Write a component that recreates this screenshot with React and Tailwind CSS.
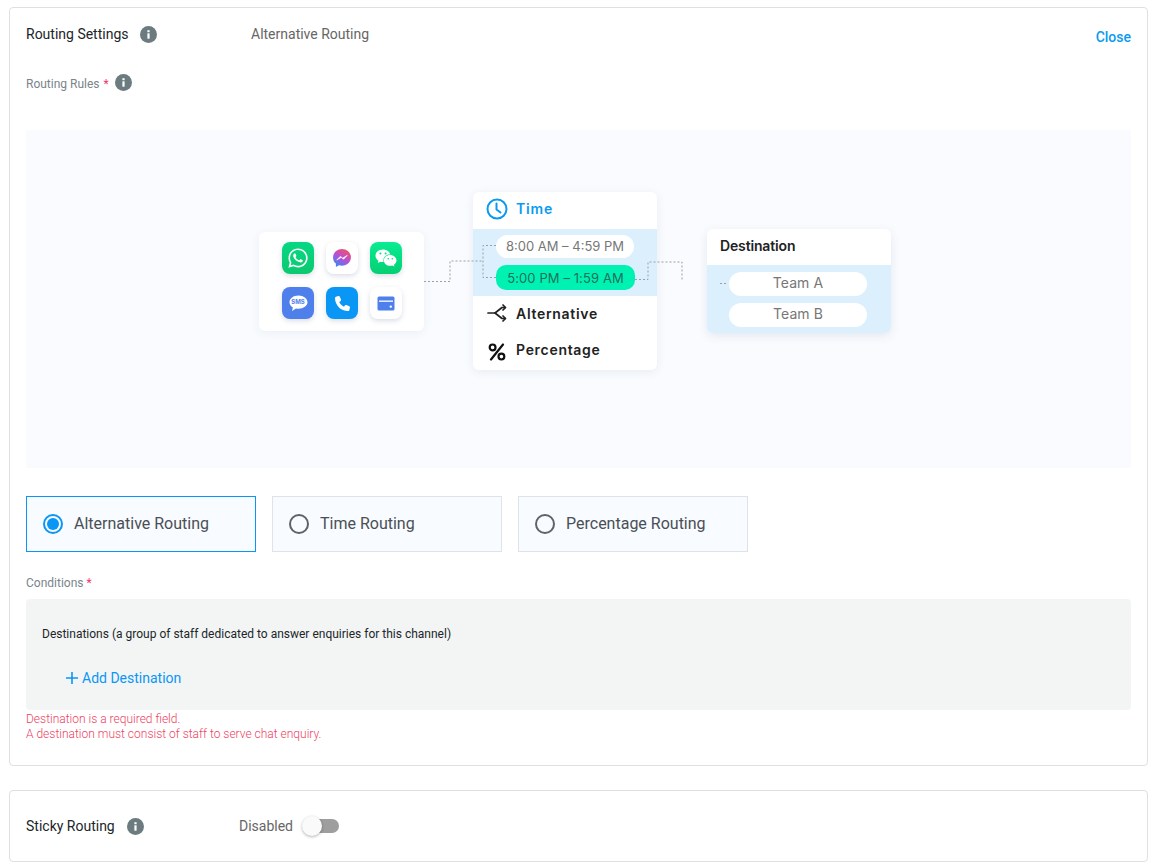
import React from 'react'
import { FaWhatsapp, FaWeixin } from 'react-icons/fa'
import { FaPhone } from 'react-icons/fa6'

// Icons

const InfoIcon = ({ className = '' }) => (
  <svg width="17" height="17" viewBox="0 0 17 17" className={"shrink-0 " + className}>
    <circle cx="8.5" cy="8.5" r="8.5" fill="#6b7b80" />
    <rect x="7.4" y="7.3" width="2.2" height="5.4" fill="#fff" />
    <rect x="7.4" y="4.2" width="2.2" height="2" fill="#fff" />
  </svg>
)

const MessengerIcon = () => (
  <svg width="20" height="20" viewBox="0 0 19 19">
    <defs>
      <linearGradient id="msg" x1="0.8" y1="0" x2="0.2" y2="1">
        <stop offset="0" stopColor="#f2545b" />
        <stop offset="0.5" stopColor="#b84fd8" />
        <stop offset="1" stopColor="#2f8cf5" />
      </linearGradient>
    </defs>
    <path d="M9.5 1C4.7 1 1 4.5 1 9c0 2.4 1 4.4 2.7 5.8V18l2.9-1.6c.9.3 1.9.4 2.9.4 4.8 0 8.5-3.5 8.5-7.9S14.3 1 9.5 1z" fill="url(#msg)" />
    <path d="M4.5 11.3 8 8l2 1.7L14.5 7 11 10.6 9 8.9z" fill="#fff" stroke="#fff" strokeWidth="0.6" strokeLinejoin="round" />
  </svg>
)

const SmsIcon = () => (
  <div className="relative w-[19px] h-[17px]">
    <svg width="19" height="17" viewBox="0 0 19 17" className="absolute inset-0">
      <path d="M9.5 0.5C4.5 0.5 0.5 3.4 0.5 7.2c0 2.2 1.4 4.1 3.4 5.3L3 16l4-2.6c.8.2 1.6.3 2.5.3 5 0 9-3 9-6.5S14.5.5 9.5.5z" fill="#fff" />
    </svg>
    <span className="absolute left-0 right-0 top-[3px] text-center text-[6px] leading-[8px] font-bold text-[#4f7fea] font-['Inter',sans-serif]">SMS</span>
  </div>
)

const CardIcon = () => (
  <svg width="18" height="15" viewBox="0 0 18 15">
    <rect x="0.5" y="0.5" width="17" height="14" rx="1.5" fill="#4f7fea" />
    <rect x="2" y="4.4" width="14" height="1.6" fill="#dfe8fc" />
    <circle cx="13.8" cy="10.6" r="1.2" fill="#fff" />
  </svg>
)

const ClockIcon = () => (
  <svg width="22" height="22" viewBox="0 0 22 22" fill="none" stroke="#0a9bf0" strokeWidth="2" strokeLinecap="round" strokeLinejoin="round">
    <circle cx="11" cy="11" r="9.5" />
    <path d="M10.5 5.5v6l4 3" />
  </svg>
)

const SplitIcon = () => (
  <svg width="20" height="18" viewBox="0 0 20 18" fill="none" stroke="#222" strokeWidth="1.7" strokeLinecap="round" strokeLinejoin="round">
    <path d="M1 9h7l7-5.5h3" />
    <path d="M8 9l7 5.5h3" />
    <path d="M16 1l2.5 2.5L16 6" />
    <path d="M16 12l2.5 2.5L16 17" />
  </svg>
)

const PercentIcon = () => (
  <svg width="18" height="18" viewBox="0 0 18 18" fill="none" stroke="#111" strokeWidth="2.2" className="mt-[4px]">
    <path d="M15 1.5 3 16.5" strokeLinecap="round" />
    <circle cx="4.6" cy="4.4" r="2.9" />
    <circle cx="13.4" cy="13.6" r="2.9" />
  </svg>
)

const appTile = "w-8 h-8 rounded-[8px] flex items-center justify-center shadow-[0_2px_5px_rgba(70,90,130,0.2)]"

const Diagram = () => (
  <div className="relative h-[338px] bg-[#f9fbfe] flex items-start pl-[233px] font-['Inter',sans-serif]">
    {/* sources */}
    <div className="mt-[102px] w-[165px] h-[99px] bg-white rounded-[6px] shadow-[0_2px_8px_rgba(80,100,140,0.08)] grid grid-cols-[32px_32px_32px] content-start gap-x-[12px] gap-y-[13px] pl-[23px] pt-[10px]">
      <div className={appTile + " bg-linear-to-b from-[#06d883] to-[#0cc96f]"}><FaWhatsapp className="text-white text-[22px]" /></div>
      <div className={appTile + " bg-white"}><MessengerIcon /></div>
      <div className={appTile + " bg-linear-to-b from-[#08ec92] to-[#06cf72]"}><FaWeixin className="text-white text-[22px]" /></div>
      <div className={appTile + " bg-[#4f7fea]"}><SmsIcon /></div>
      <div className={appTile + " bg-[#0a96f5]"}><FaPhone className="text-white text-[15px]" /></div>
      <div className={appTile + " bg-white"}><CardIcon /></div>
    </div>

    {/* conditions */}
    <div className="relative ml-[49px] mt-[62px] w-[184px] h-[178px] bg-white rounded-[6px] shadow-[0_2px_8px_rgba(80,100,140,0.1)] overflow-hidden">
      <div className="h-[37px] pb-[4px] flex items-center gap-[8px] pl-[13px] text-[14px] font-semibold tracking-[0.8px] text-[#0a9bf0]">
        <ClockIcon />
        Time
      </div>
      <div className="h-[67px] bg-[#dbeffd] pl-[23px] pt-[6px] text-[13px] flex flex-col gap-[7px]">
        <div className="w-[138px] h-[23px] rounded-full bg-white text-[#777] flex items-center justify-center">8:00 AM – 4:59 PM</div>
        <div className="w-[139px] h-[25px] pt-[2px] rounded-[10px] bg-[#00f2b3] text-[#1f6f5c] tracking-[0.1px] flex items-center justify-center">5:00 PM – 1:59 AM</div>
      </div>
      <div className="h-[37px] pb-[3px] flex items-center gap-[9px] pl-[14px] text-[14px] font-semibold tracking-[0.7px] text-[#222]">
        <SplitIcon />
        Alternative
      </div>
      <div className="h-[37px] pb-[4px] flex items-center gap-[10px] pl-[15px] text-[14px] font-semibold tracking-[0.7px] text-[#222]">
        <PercentIcon />
        Percentage
      </div>
    </div>

    {/* destination */}
    <div className="ml-[50px] mt-[99px] w-[184px] h-[104px] bg-white rounded-[6px] shadow-[0_3px_10px_rgba(80,100,140,0.12)] overflow-hidden">
      <div className="h-[36px] pb-[4px] flex items-center pl-[13px] text-[14px] font-semibold tracking-[-0.15px] text-[#222]">Destination</div>
      <div className="h-[68px] bg-[#dbeffd] pl-[22px] pt-[7px] flex flex-col gap-[7px] text-[14px] tracking-[0.1px] text-[#777]">
        <div className="w-[138px] h-[24px] pb-[4px] rounded-full bg-white flex items-center justify-center">Team A</div>
        <div className="w-[138px] h-[24px] pb-[4px] rounded-full bg-white flex items-center justify-center">Team B</div>
      </div>
    </div>

    {/* dashed connectors */}
    <svg width="1105" height="338" className="absolute inset-0 pointer-events-none" fill="none" stroke="#9aa0a6" strokeWidth="1" strokeDasharray="2 2">
      <path d="M398 151.5h26v-20.5h33" />
      <path d="M470 115.5h-13v32h13" />
      <path d="M609 149.5h13v-17.5h34v19" />
      <path d="M694 153.5h8" />
    </svg>
  </div>
)

const RadioCard = ({ label, active }) => (
  <div className={"w-[230px] h-[56px] flex items-center gap-[11px] pl-[16px] bg-[#f8fbff] border " + (active ? "border-[#0a96f5]" : "border-[#dfe3e8]")}>
    {active ? (
      <span className="w-[20px] h-[20px] rounded-full border-2 border-[#0a96f5] flex items-center justify-center">
        <span className="w-[12px] h-[12px] rounded-full bg-[#0a96f5]"></span>
      </span>
    ) : (
      <span className="w-[20px] h-[20px] rounded-full border-2 border-[#5f6368]"></span>
    )}
    <span className="text-[16px] text-[#4a4f55]">{label}</span>
  </div>
)

const App = () => {
  return (
    <div className="bg-white h-[868px] overflow-hidden pt-[7px] pl-[9px] pr-[7px] font-['Roboto',sans-serif]">

      <div className="h-[759px] border border-[#e0e0e0] rounded-[4px] px-[16px]">
        <div className="flex items-start h-[54px] pt-[17px]">
          <div className="w-[225px] flex items-center gap-[11px] h-[18px]">
            <h2 className="text-[14px] text-[#212529]">Routing Settings</h2>
            <InfoIcon />
          </div>
          <span className="text-[14px] leading-[18px] text-[#666]">Alternative Routing</span>
          <button className="ml-auto mt-[3px] text-[14px] leading-[18px] font-medium text-[#0a9bf0]">Close</button>
        </div>

        <div className="flex items-center h-[18px] mt-[13px] text-[12px] text-[#7a858a]">
          Routing Rules
          <span className="ml-[4px] mr-[6px] text-[#f0386b]">*</span>
          <InfoIcon className="-mt-[3px]" />
        </div>

        <div className="mt-[37px]">
          <Diagram />
        </div>

        <div className="flex gap-[16px] mt-[28px]">
          <RadioCard label="Alternative Routing" active />
          <RadioCard label="Time Routing" />
          <RadioCard label="Percentage Routing" />
        </div>

        <div className="mt-[23px] h-[16px] text-[12px] leading-[16px] text-[#7a858a]">
          Conditions <span className="text-[#f0386b]">*</span>
        </div>

        <div className="mt-[8px] h-[111px] bg-[#f3f5f5] rounded-[4px] pl-[16px] pt-[27px]">
          <p className="text-[12px] leading-[16px] text-[#212529]">Destinations (a group of staff dedicated to answer enquiries for this channel)</p>
          <button className="flex items-center gap-[4px] ml-[24px] mt-[27px] text-[14px] leading-[18px] text-[#0a96f5]">
            <svg width="12" height="12" viewBox="0 0 12 12" stroke="#0a96f5" strokeWidth="1.6"><path d="M6 0v12M0 6h12" /></svg>
            Add Destination
          </button>
        </div>

        <div className="mt-[2px] text-[12px] leading-[15px] font-light text-[#ee3f5f]">
          <p>Destination is a required field.</p>
          <p>A destination must consist of staff to serve chat enquiry.</p>
        </div>
      </div>

      <div className="mt-[24px] h-[72px] border border-[#e0e0e0] rounded-[4px] px-[16px] flex items-center">
        <div className="w-[213px] flex items-center gap-[12px]">
          <h2 className="text-[14px] text-[#212529]">Sticky Routing</h2>
          <InfoIcon />
        </div>
        <span className="text-[14px] text-[#666]">Disabled</span>
        <div className="relative ml-[17px] w-[29px] h-[14px] rounded-full bg-[#9e9e9e]">
          <span className="absolute left-[-8px] top-[-3px] w-[20px] h-[20px] rounded-full bg-[#fafafa] shadow-[0_1px_3px_rgba(0,0,0,0.3)]"></span>
        </div>
      </div>

    </div>
  )
}

export default App
